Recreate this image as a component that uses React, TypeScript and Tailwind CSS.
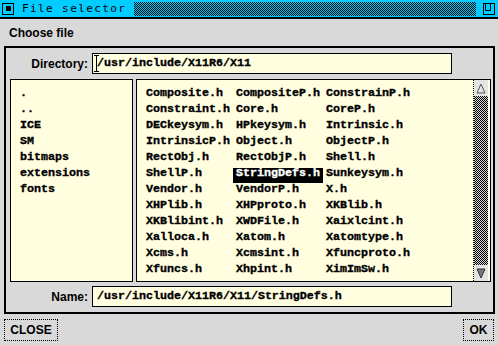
import React from 'react';

const files: string[][] = [
  ['Composite.h', 'CompositeP.h', 'ConstrainP.h'],
  ['Constraint.h', 'Core.h', 'CoreP.h'],
  ['DECkeysym.h', 'HPkeysym.h', 'Intrinsic.h'],
  ['IntrinsicP.h', 'Object.h', 'ObjectP.h'],
  ['RectObj.h', 'RectObjP.h', 'Shell.h'],
  ['ShellP.h', 'StringDefs.h', 'Sunkeysym.h'],
  ['Vendor.h', 'VendorP.h', 'X.h'],
  ['XHPlib.h', 'XHPproto.h', 'XKBlib.h'],
  ['XKBlibint.h', 'XWDFile.h', 'Xaixlcint.h'],
  ['Xalloca.h', 'Xatom.h', 'Xatomtype.h'],
  ['Xcms.h', 'Xcmsint.h', 'Xfuncproto.h'],
  ['Xfuncs.h', 'Xhpint.h', 'XimImSw.h']
];

const dirs = ['.', '..', 'ICE', 'SM', 'bitmaps', 'extensions', 'fonts'];

const selected = 'StringDefs.h';

const mono = "font-['Liberation_Mono','DejaVu_Sans_Mono',monospace] font-bold text-[11.67px] [-webkit-text-stroke:0.35px]";

// 1px black/colour dither, like the old X stipple
const Checker: React.FC<{ id: string; bg: string; className?: string }> = ({ id, bg, className }) => (
  <svg className={className} width="100%" height="100%" shapeRendering="crispEdges">
    <defs>
      <pattern id={id} width="2" height="2" patternUnits="userSpaceOnUse">
        <rect width="2" height="2" fill={bg} />
        <rect x="0" y="0" width="1" height="1" fill="#000" />
        <rect x="1" y="1" width="1" height="1" fill="#000" />
      </pattern>
    </defs>
    <rect width="100%" height="100%" fill={`url(#${id})`} />
  </svg>
);

const App: React.FC = () => {
  return (
    <div className="w-[498px] h-[345px] overflow-hidden bg-[#d9d9d9] flex flex-col text-black font-['Liberation_Sans',Arial,sans-serif]">
      {/* TITLE BAR */}
      <div className="h-[19px] bg-[#00ccff] border-b-2 border-black flex items-center">
        <div className="ml-[2px] w-[12px] h-[12px] border border-black flex items-center justify-center">
          <div className="w-[5px] h-[5px] bg-black" />
        </div>
        <span className="ml-[8px] font-['DejaVu_Sans_Mono',monospace] text-[11px] tracking-[1.4px] leading-none">
          File selector
        </span>
        <div className="ml-[8px] flex-1 h-[14px]">
          <Checker id="title-dither" bg="#00ccff" className="block" />
        </div>
        <svg className="ml-[7px] mr-[3px]" width="12" height="12" viewBox="0 0 12 12">
          <rect x="0.5" y="0.5" width="11" height="11" fill="none" stroke="#000" />
          <path d="M2.5 0.5 V7.5 H7.5 V0.5" fill="none" stroke="#000" />
        </svg>
      </div>

      {/* HEADING */}
      <div className="h-[27px] flex items-center pl-[9px] text-[12px] font-bold">Choose file</div>

      {/* MAIN FRAME */}
      <div className="ml-[4px] mr-[3px] h-[268px] border-2 border-black flex flex-col">
        {/* directory */}
        <div className="mt-[5px] h-[21px] flex items-center">
          <span className="w-[82px] text-right text-[12px] font-bold">Directory:</span>
          <div className={`relative ml-[4px] w-[360px] h-[21px] border border-black bg-[#ffffe0] flex items-center pl-[4px] ${mono}`}>
            <svg className="absolute left-[1px] top-[1px]" width="5" height="17" viewBox="0 0 5 17">
              <path d="M0 0.5 H5 M2.5 0 V17 M0 16.5 H5" stroke="#000" />
            </svg>
            /usr/include/X11R6/X11
          </div>
        </div>

        {/* lists */}
        <div className="mt-[5px] h-[203px] flex gap-[3px] pl-[4px] pr-[2px]">
          <div className={`w-[123px] border border-black bg-[#ffffe0] pt-[5px] pl-[9px] leading-[16px] ${mono}`}>
            {dirs.map((d) => (
              <div key={d} className="h-[16px]">{d}</div>
            ))}
          </div>

          <div className="flex-1 border border-black bg-[#ffffe0] flex">
            <div className={`flex-1 grid grid-cols-[90px_90px_90px] auto-rows-[16px] content-start pt-[5px] pl-[9px] leading-[16px] whitespace-nowrap ${mono}`}>
              {files.flat().map((f) =>
                f === selected ? (
                  <div key={f} className="relative h-[16px] text-white">
                    <div className="absolute -left-[3px] top-[3px] w-[90px] h-[15px] bg-black" />
                    <span className="relative">{f}</span>
                  </div>
                ) : (
                  <div key={f} className="h-[16px]">{f}</div>
                )
              )}
            </div>

            {/* scrollbar */}
            <div className="w-[15px] mr-[2px] border-l border-dotted border-black flex flex-col">
              <div className="h-[16px] bg-[#e4e4e4] flex items-center justify-center">
                <svg width="10" height="11" viewBox="0 0 10 11">
                  <path d="M5 1 L9 10 H1 Z" fill="#e4e4e4" stroke="#555" />
                </svg>
              </div>
              <div className="flex-1">
                <Checker id="track-dither" bg="#d9d9d9" className="block" />
              </div>
              <div className="h-[16px] bg-[#e4e4e4] flex items-center justify-center">
                <svg width="10" height="11" viewBox="0 0 10 11">
                  <path d="M1 1 H9 L5 10 Z" fill="#777" stroke="#333" />
                </svg>
              </div>
            </div>
          </div>
        </div>

        {/* name */}
        <div className="mt-[4px] h-[21px] flex items-center">
          <span className="w-[82px] text-right text-[12px] font-bold">Name:</span>
          <div className={`ml-[4px] w-[360px] h-[21px] border border-black bg-[#ffffe0] flex items-center pl-[4px] ${mono}`}>
            /usr/include/X11R6/X11/StringDefs.h
          </div>
        </div>
      </div>

      {/* BUTTONS */}
      <div className="mt-[5px] flex justify-between pl-[4px] pr-[4px]">
        <button className="w-[54px] h-[22px] border border-dotted border-black text-[12px] font-bold flex items-center justify-center">
          CLOSE
        </button>
        <button className="w-[31px] h-[22px] border border-dotted border-black text-[12px] font-bold flex items-center justify-center">
          OK
        </button>
      </div>
    </div>
  );
};

export default App;
